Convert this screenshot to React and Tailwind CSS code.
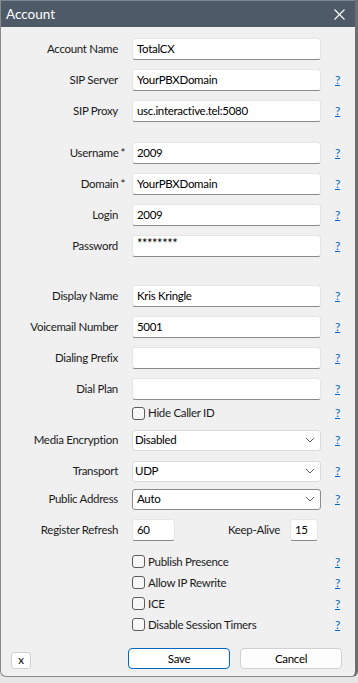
const Help = () => (
  <span className="ml-[14px] text-[12px] leading-none text-[#0067c0] underline">?</span>
);

const Row = ({ label, req, className = "", children, help = true }) => (
  <div className={`flex items-center ${className}`}>
    <div className="w-[117px] shrink-0 flex justify-end text-[#1b1b1b]">
      <span>{label}</span>
      {req && <span className="ml-[2px] -mr-[7px]">*</span>}
    </div>
    <div className="ml-[14px] w-[189px] shrink-0 flex items-center">{children}</div>
    {help && <Help />}
  </div>
);

const Field = ({ value, className = "w-full" }) => (
  <div
    className={`h-[22px] bg-white border border-[#e6e6e6] border-b-[#8a8a8a] rounded-[3px] px-[4px] flex items-center text-black ${className}`}
  >
    {value}
  </div>
);

const Chevron = () => (
  <svg width="10" height="6" viewBox="0 0 10 6">
    <path d="M1 1 L5 5 L9 1" fill="none" stroke="#5f5f5f" strokeWidth="1" />
  </svg>
);

const Select = ({ value, dark }) => (
  <div
    className={`h-[21px] w-full bg-white border rounded-[3px] ${
      dark ? "border-[#8c8c8c] pl-[4px]" : "border-[#dadada] pl-[2px]"
    } pr-[5px] flex items-center justify-between text-black`}
  >
    <span>{value}</span>
    <Chevron />
  </div>
);

const Check = ({ label }) => (
  <div className="flex items-center">
    <div className="w-[13px] h-[13px] rounded-[3px] border border-[#5c5c5c] bg-[#f7f7f7]" />
    <span className="ml-[3px] text-[#1b1b1b]">{label}</span>
  </div>
);

export default function App() {
  return (
    <div className="w-[358px] h-[683px] bg-[#e6e6e6] font-['Lato',sans-serif] text-[11.5px] tracking-[-0.3px]">
      <div className="w-[358px] h-[677px] flex flex-col bg-[#f0f0f0] border-l border-b border-[#8a8a8a] border-r-[3px] border-r-[#6e6e6e] rounded-b-[6px] overflow-hidden">
        <div className="h-[27px] shrink-0 bg-[#4e5a68] border-t border-[#7a8592] flex items-center justify-between pl-[5px] pr-[10px]">
          <span className="text-white text-[13.5px] tracking-[0px]">Account</span>
          <svg width="11" height="11" viewBox="0 0 11 11" className="mt-[1px]">
            <path d="M0.5 0.5 L10.5 10.5 M10.5 0.5 L0.5 10.5" stroke="white" strokeWidth="1.1" />
          </svg>
        </div>

        <div className="flex flex-col pt-[6px]">
          <Row label="Account Name" help={false} className="h-[31px]">
            <Field value="TotalCX" />
          </Row>
          <Row label="SIP Server" className="h-[31px]">
            <Field value="YourPBXDomain" />
          </Row>
          <Row label="SIP Proxy" className="h-[31px]">
            <Field value="usc.interactive.tel:5080" />
          </Row>

          <Row label="Username" req className="h-[31px] mt-[11px]">
            <Field value="2009" />
          </Row>
          <Row label="Domain" req className="h-[31px]">
            <Field value="YourPBXDomain" />
          </Row>
          <Row label="Login" className="h-[31px]">
            <Field value="2009" />
          </Row>
          <Row label="Password" className="h-[31px]">
            <Field value={<span className="-mt-[3px] text-[13px] tracking-[-0.5px]">********</span>} />
          </Row>

          <Row label="Display Name" className="h-[31px] mt-[19px]">
            <Field value="Kris Kringle" />
          </Row>
          <Row label="Voicemail Number" className="h-[31px]">
            <Field value="5001" />
          </Row>
          <Row label="Dialing Prefix" className="h-[31px]">
            <Field value="" />
          </Row>
          <Row label="Dial Plan" className="h-[31px]">
            <Field value="" />
          </Row>
          <Row label="" className="h-[18px]">
            <Check label="Hide Caller ID" />
          </Row>

          <Row label="Media Encryption" className="h-[28px] mt-[4px]">
            <Select value="Disabled" />
          </Row>
          <Row label="Transport" className="h-[28px] mt-[3px]">
            <Select value="UDP" />
          </Row>
          <Row label="Public Address" className="h-[28px]">
            <Select value="Auto" dark />
          </Row>

          <div className="flex items-center h-[28px] mt-[3px]">
            <div className="w-[117px] shrink-0 text-right text-[#1b1b1b]">Register Refresh</div>
            <Field value="60" className="ml-[14px] w-[43px]" />
            <span className="ml-auto text-[#1b1b1b]">Keep-Alive</span>
            <Field value="15" className="ml-[10px] mr-[37px] w-[28px]" />
          </div>

          <Row label="" className="h-[21px] mt-[7px]">
            <Check label="Publish Presence" />
          </Row>
          <Row label="" className="h-[21px]">
            <Check label="Allow IP Rewrite" />
          </Row>
          <Row label="" className="h-[21px]">
            <Check label="ICE" />
          </Row>
          <Row label="" className="h-[21px]">
            <Check label="Disable Session Timers" />
          </Row>

          <div className="flex items-center h-[21px] mt-[13px]">
            <button className="ml-[10px] mt-[3px] w-[20px] h-[17px] bg-white border border-[#d0d0d0] rounded-[3px] leading-none text-black flex items-center justify-center">
              x
            </button>
            <button className="ml-[97px] w-[102px] h-[21px] bg-white border border-[#0067c0] rounded-[4px] text-black flex items-center justify-center">
              Save
            </button>
            <button className="ml-[10px] w-[102px] h-[21px] bg-[#fdfdfd] border border-[#d0d0d0] rounded-[4px] text-black flex items-center justify-center">
              Cancel
            </button>
          </div>
        </div>
      </div>
    </div>
  );
}
